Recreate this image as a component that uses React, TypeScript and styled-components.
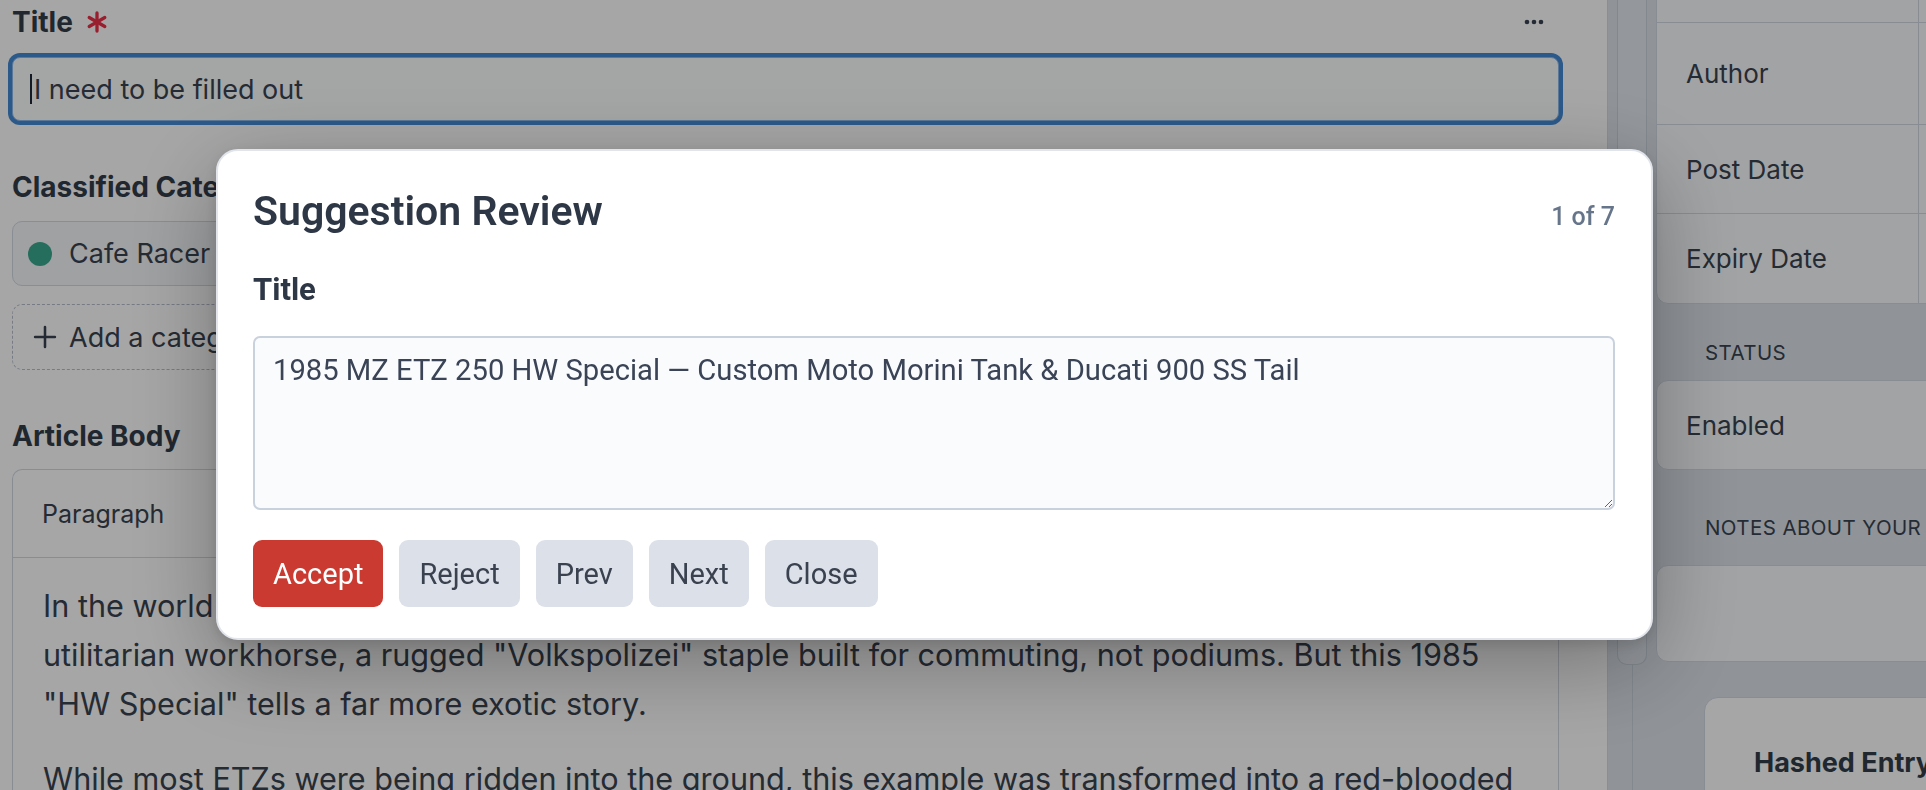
import styled, { createGlobalStyle } from "styled-components";
import { Asterisk, Plus, Bold, Italic, Link2, List, ListOrdered } from "lucide-react";

const GlobalStyle = createGlobalStyle`
  * {
    box-sizing: border-box;
  }
  html, body {
    margin: 0;
    padding: 0;
    overflow: hidden;
  }
  body {
    background: #ffffff;
    font-family: Inter, "Noto Sans", "Liberation Sans", sans-serif;
    color: #3a4350;
  }
`;

const infoRows = [
  { label: "Slug", height: 80 },
  { label: "Author", height: 102 },
  { label: "Post Date", height: 89 },
  { label: "Expiry Date", height: 90 },
];

const actions = [
  { label: "Accept", primary: true },
  { label: "Reject" },
  { label: "Prev" },
  { label: "Next" },
  { label: "Close" },
];

const MoreDots = () => (
  <svg width="20" height="6" viewBox="0 0 20 6">
    <circle cx="3" cy="3" r="2.3" fill="#3a4350" />
    <circle cx="10" cy="3" r="2.3" fill="#3a4350" />
    <circle cx="17" cy="3" r="2.3" fill="#3a4350" />
  </svg>
);

const App = () => {
  return (
    <>
      <GlobalStyle />
      <Page>
        <Main>
          <FieldHeader>
            <FieldLabel>
              Title
              <RequiredMark size={36} strokeWidth={2.2} />
            </FieldLabel>
            <MoreDots />
          </FieldHeader>
          <TitleInput>
            <Caret />I need to be filled out
          </TitleInput>

          <FieldHeader $top={48}>
            <FieldLabel>Classified Categories</FieldLabel>
          </FieldHeader>
          <CategoryChip>
            <Dot />
            Cafe Racer
          </CategoryChip>
          <AddCategory>
            <Plus size={34} strokeWidth={1.8} />
            Add a category
          </AddCategory>

          <FieldHeader $top={48}>
            <FieldLabel>Article Body</FieldLabel>
          </FieldHeader>
          <Editor>
            <Toolbar>
              <span>Paragraph</span>
              <ToolGroup>
                <Bold size={26} />
                <Italic size={26} />
                <Link2 size={26} />
                <List size={26} />
                <ListOrdered size={26} />
              </ToolGroup>
            </Toolbar>
            <EditorBody>
              <p>
                In the world of East German motorcycles, the MZ ETZ 250 is usually remembered as a humble,
                utilitarian workhorse, a rugged "Volkspolizei" staple built for commuting, not podiums. But
                this 1985 "HW Special" tells a far more exotic story.
              </p>
              <p>
                While most ETZs were being ridden into the ground, this example was transformed into a
                red-blooded café racer wearing Italian parts from tank to tail.
              </p>
            </EditorBody>
          </Editor>
        </Main>

        <Rail>
          <Handle />
          <RailLine />
        </Rail>

        <Sidebar>
          <SideInner>
            <InfoTable>
              {infoRows.map((row) => (
                <InfoRow key={row.label} $height={row.height}>
                  <InfoLabel>{row.label}</InfoLabel>
                  <div />
                </InfoRow>
              ))}
            </InfoTable>
            <SectionHeading $top={36} $bottom={14}>Status</SectionHeading>
            <StatusBox>Enabled</StatusBox>
            <SectionHeading $top={45} $bottom={24}>Notes about your entry</SectionHeading>
            <NotesBox />
            <HashCard>Hashed Entry ID</HashCard>
          </SideInner>
        </Sidebar>
      </Page>

      <Overlay>
        <Dialog>
          <DialogHeader>
            <DialogTitle>Suggestion Review</DialogTitle>
            <Counter>1 of 7</Counter>
          </DialogHeader>
          <FieldTitle>Title</FieldTitle>
          <SuggestionText
            readOnly
            defaultValue="1985 MZ ETZ 250 HW Special — Custom Moto Morini Tank & Ducati 900 SS Tail"
          />
          <Actions>
            {actions.map((a) => (
              <ActionButton key={a.label} $primary={a.primary}>
                {a.label}
              </ActionButton>
            ))}
          </Actions>
        </Dialog>
      </Overlay>
    </>
  );
};

export default App;

const Page = styled.div`
  display: flex;
  width: 1926px;
  height: 790px;
  overflow: hidden;
  background: #ffffff;
`;

const Main = styled.div`
  flex: none;
  width: 1608px;
  height: 100%;
  padding: 4px 48px 0 12px;
  border-right: 1.5px solid #d3dae3;
  background: #ffffff;
`;

const FieldHeader = styled.div<{ $top?: number }>`
  display: flex;
  align-items: center;
  justify-content: space-between;
  height: 36px;
  margin-top: ${(p) => p.$top ?? 0}px;
  padding-right: 15px;
`;

const FieldLabel = styled.div`
  display: inline-flex;
  align-items: center;
  font-size: 28px;
  font-weight: 700;
  line-height: 36px;
  color: #333c49;
`;

const RequiredMark = styled(Asterisk)`
  margin-left: 6px;
  color: #ec2f48;
`;

const TitleInput = styled.div`
  display: flex;
  align-items: center;
  height: 64px;
  margin-top: 17px;
  padding: 0 17px;
  border: 1.5px solid #8db9ea;
  border-radius: 8px;
  box-shadow: 0 0 0 4px #4389d4;
  background: #fcfdfd;
  font-size: 27px;
  color: #3a4350;
`;

const Caret = styled.span`
  width: 2px;
  height: 30px;
  margin-right: 2px;
  background: #1f2937;
`;

const CategoryChip = styled.div`
  display: flex;
  align-items: center;
  gap: 17px;
  width: fit-content;
  height: 65px;
  margin-top: 16px;
  padding: 0 26px 0 15px;
  border: 1.5px solid #d3dae4;
  border-radius: 10px;
  background: #f5f7fa;
  font-size: 27px;
`;

const Dot = styled.span`
  width: 24px;
  height: 24px;
  border-radius: 50%;
  background: #3aa98f;
`;

const AddCategory = styled.div`
  display: flex;
  align-items: center;
  gap: 7px;
  width: fit-content;
  height: 66px;
  margin-top: 18px;
  padding: 0 28px 0 15px;
  border: 1.5px dashed #b5becb;
  border-radius: 10px;
  font-size: 27px;
`;

const Editor = styled.div`
  margin-top: 15px;
  border: 1.5px solid #d1d9e3;
  border-bottom: none;
  border-radius: 10px 10px 0 0;
`;

const Toolbar = styled.div`
  display: flex;
  align-items: center;
  gap: 60px;
  height: 88px;
  padding: 0 29px;
  border-bottom: 1.5px solid #d1d9e3;
  font-size: 25px;
`;

const ToolGroup = styled.div`
  display: flex;
  gap: 22px;
  color: #4b5563;
`;

const EditorBody = styled.div`
  padding: 23px 30px 0 30px;
  font-size: 30.6px;
  line-height: 49px;
  color: #39424f;

  p {
    margin: 0 0 26px;
  }
`;

const Rail = styled.div`
  flex: none;
  display: flex;
  flex-direction: column;
  width: 48px;
  height: 100%;
  background: #dde3eb;
`;

const Handle = styled.div`
  width: 30px;
  height: 665px;
  margin-left: 9px;
  border: 1.5px solid #c9d1dc;
  border-top: none;
  border-radius: 0 0 10px 10px;
  background: #e3e8ef;
`;

const RailLine = styled.div`
  flex: 1;
  margin-left: 24px;
  border-left: 1.5px solid #c9d1dc;
`;

const Sidebar = styled.div`
  flex: 1;
  min-width: 0;
  height: 100%;
  overflow: hidden;
  background: #dde3eb;
`;

const SideInner = styled.div`
  width: 340px;
`;

const InfoTable = styled.div`
  margin-top: -59px;
  border: 1.5px solid #d2d9e3;
  border-radius: 0 0 12px 12px;
  background: #f8fafc;
`;

const InfoRow = styled.div<{ $height: number }>`
  display: grid;
  grid-template-columns: 262px 1fr;
  height: ${(p) => p.$height}px;

  & + & {
    border-top: 1.5px solid #d2d9e3;
  }
`;

const InfoLabel = styled.div`
  display: flex;
  align-items: center;
  padding-left: 29px;
  border-right: 1.5px solid #d2d9e3;
  font-size: 26px;
  color: #3a4350;
`;

const SectionHeading = styled.div<{ $top: number; $bottom: number }>`
  padding: ${(p) => p.$top}px 0 ${(p) => p.$bottom}px 49px;
  font-size: 20.5px;
  line-height: 26px;
  letter-spacing: 0.4px;
  text-transform: uppercase;
  white-space: nowrap;
  color: #3a4350;
`;

const StatusBox = styled.div`
  display: flex;
  align-items: center;
  height: 90px;
  padding-left: 29px;
  border: 1.5px solid #d2d9e3;
  border-radius: 12px;
  background: #f8fafc;
  font-size: 26px;
`;

const NotesBox = styled.div`
  height: 97px;
  border: 1.5px solid #d2d9e3;
  border-radius: 12px;
  background: #f8fafc;
`;

const HashCard = styled.div`
  height: 220px;
  margin: 35px 0 0 48px;
  padding: 47px 0 0 49px;
  border: 1.5px solid #d2d9e3;
  border-radius: 14px;
  background: #ffffff;
  font-size: 27px;
  font-weight: 700;
  line-height: 36px;
  white-space: nowrap;
  color: #333c49;
`;

const Overlay = styled.div`
  position: fixed;
  inset: 0;
  display: flex;
  align-items: flex-start;
  padding: 149px 0 0 216px;
  background: rgba(0, 0, 0, 0.35);
`;

const Dialog = styled.div`
  width: 1437px;
  padding: 38px 36px 31px 35px;
  border: 2px solid #e1e5eb;
  border-radius: 22px;
  background: #ffffff;
  box-shadow: 0 24px 90px rgba(0, 0, 0, 0.3), 0 4px 14px rgba(0, 0, 0, 0.12);
  font-family: Roboto, "Liberation Sans", sans-serif;
`;

const DialogHeader = styled.div`
  display: flex;
  align-items: baseline;
  justify-content: space-between;
`;

const DialogTitle = styled.h2`
  margin: 0;
  font-size: 41px;
  font-weight: 600;
  line-height: 44px;
  color: #2e3746;
`;

const Counter = styled.span`
  font-size: 25px;
  font-weight: 500;
  color: #66758a;
`;

const FieldTitle = styled.div`
  margin-top: 39px;
  font-size: 31px;
  font-weight: 700;
  line-height: 36px;
  color: #2e3746;
`;

const SuggestionText = styled.textarea`
  display: block;
  width: 100%;
  height: 174px;
  margin-top: 28px;
  padding: 14px 18px;
  border: 2px solid #c9d1dc;
  border-radius: 7px;
  background: #f9fbfd;
  font-family: Roboto, "Liberation Sans", sans-serif;
  font-size: 29.2px;
  line-height: 36px;
  color: #3a4456;
  outline: none;
`;

const Actions = styled.div`
  display: flex;
  gap: 16px;
  margin-top: 30px;
`;

const ActionButton = styled.button<{ $primary?: boolean }>`
  height: 67px;
  padding: 0 20px;
  border: none;
  border-radius: 9px;
  background: ${(p) => (p.$primary ? "#cb3a31" : "#dce0e8")};
  color: ${(p) => (p.$primary ? "#ffffff" : "#3a4250")};
  font-family: Roboto, "Liberation Sans", sans-serif;
  font-size: 29px;
  cursor: pointer;
`;
